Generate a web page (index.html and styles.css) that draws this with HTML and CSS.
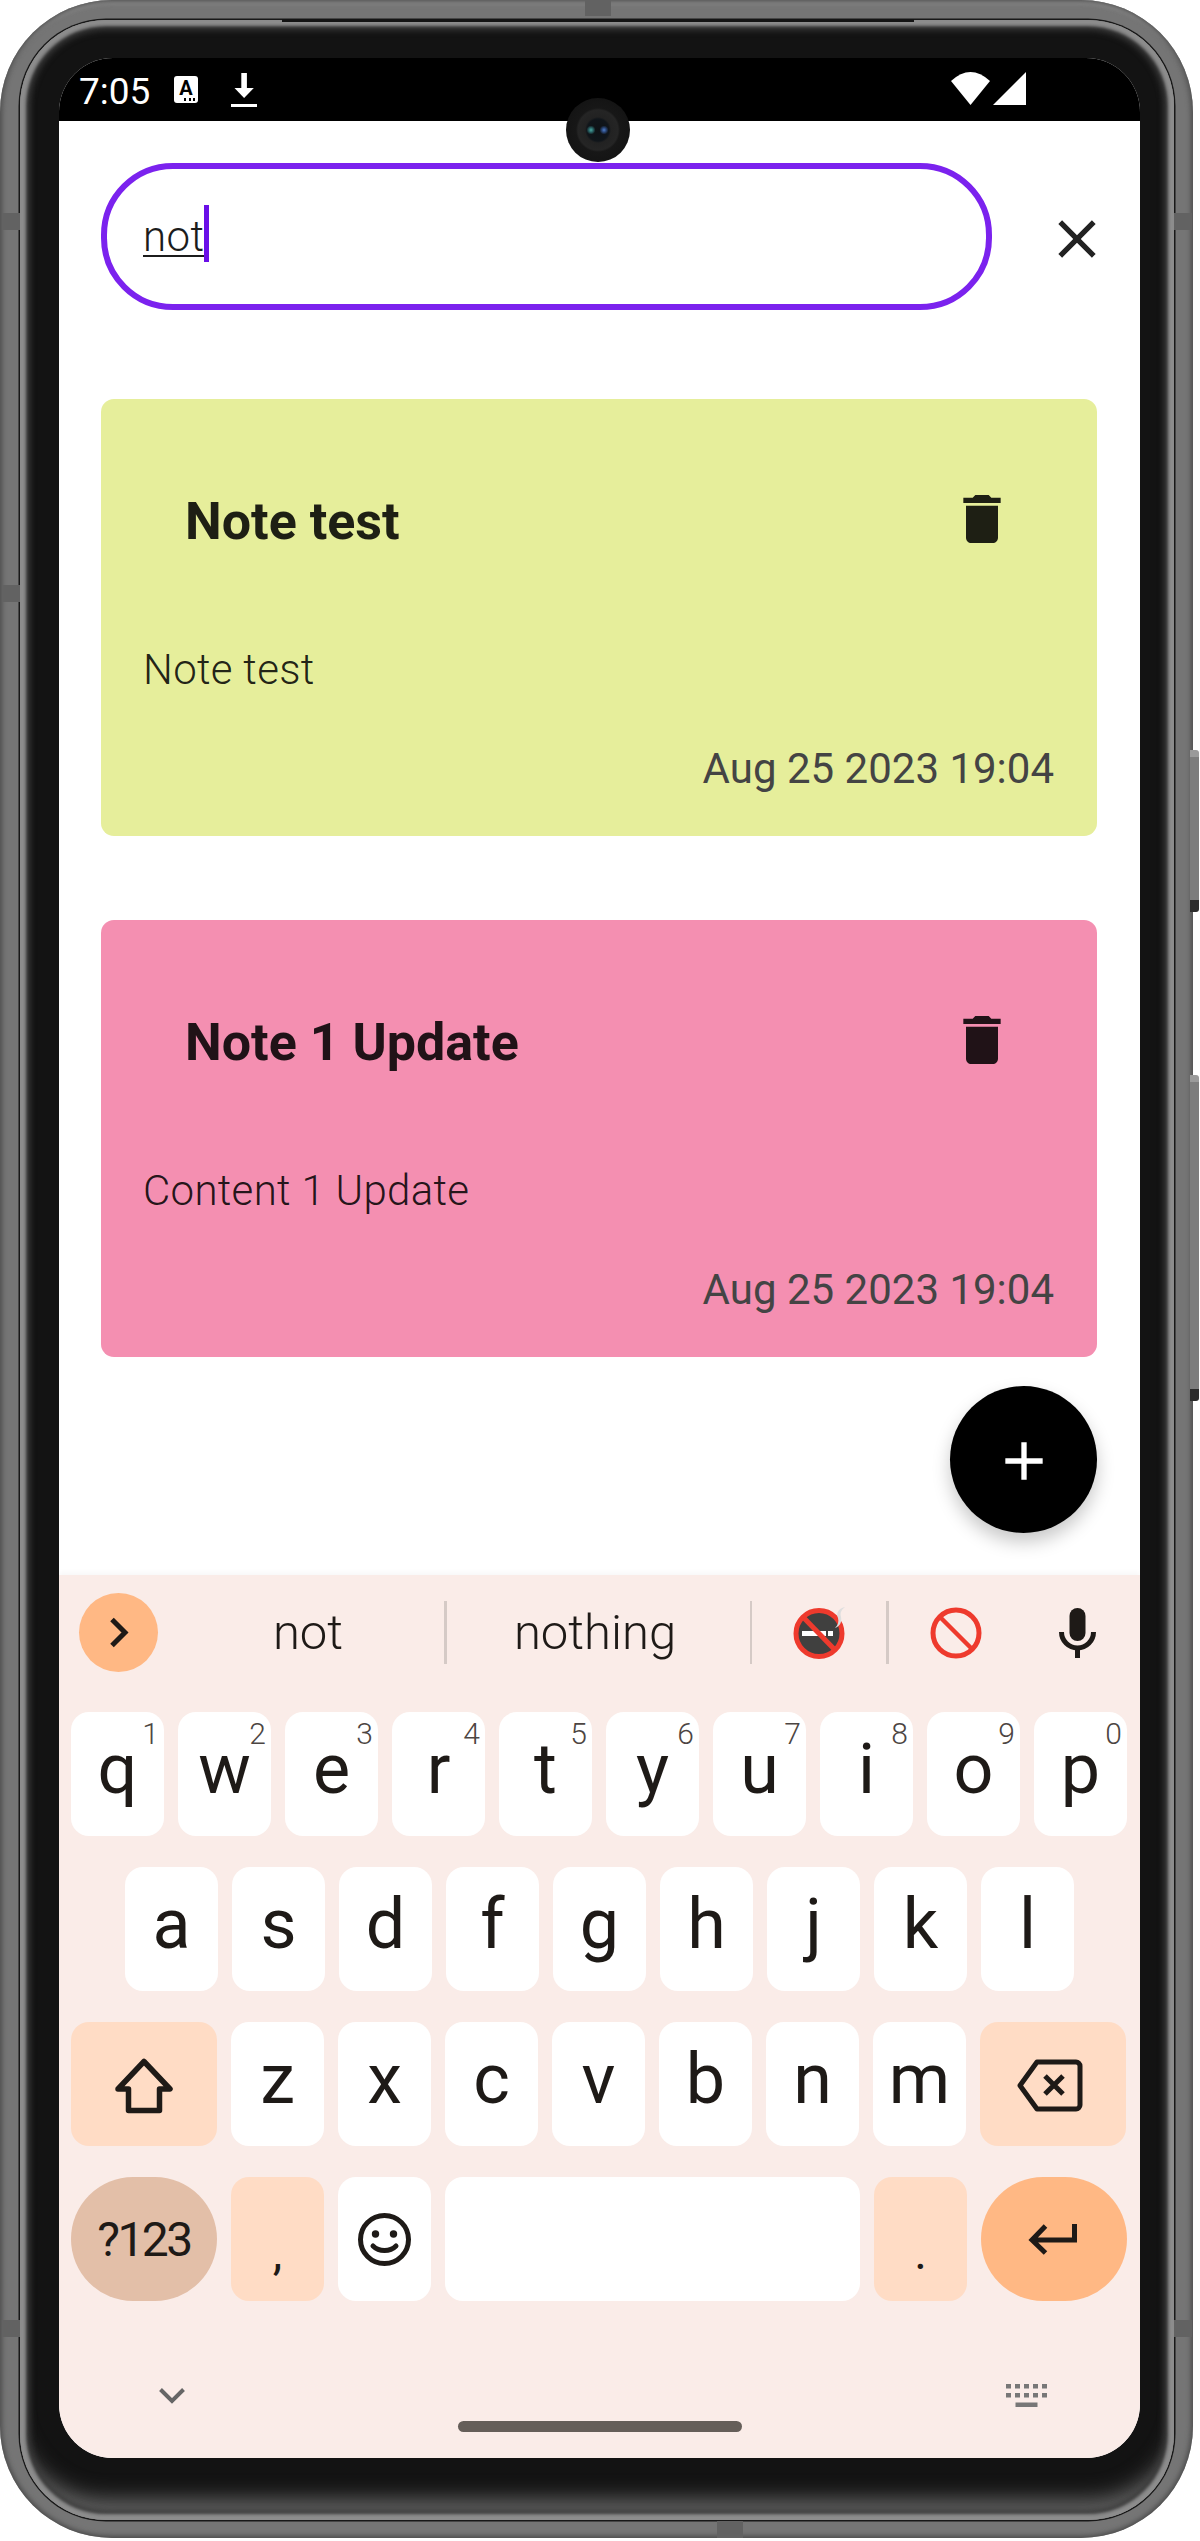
FILE: index.html
```html
<!DOCTYPE html>
<html lang="en">
<head>
<meta charset="utf-8">
<title>Notes search</title>
<link rel="stylesheet" href="styles.css">
</head>
<body>
<div class="phone">
  <span class="side-btn side-btn-power"></span>
  <span class="side-btn side-btn-volume"></span>
  <span class="band band-top"></span>
  <span class="band band-bottom"></span>
  <span class="band band-l1"></span>
  <span class="band band-l2"></span>
  <span class="band band-l3"></span>
  <span class="band band-r1"></span>
  <span class="band band-r2"></span>
  <div class="bezel">
    <div class="screen">
      <div class="status">
        <span class="time">7:05</span>
        <span class="a-icon">A</span>
        <svg class="dl-icon" viewBox="0 0 26 34"><rect x="10.3" y="0" width="5.6" height="16"/><path d="M3.5 15h19.3l-9.7 10z"/><rect x="0" y="31" width="26" height="3"/></svg>
        <svg class="wifi-icon" viewBox="0 0 39 33"><path d="M19.5 33 0 9Q19.5-9 39 9z"/></svg>
        <svg class="signal-icon" viewBox="0 0 33 33"><path d="M33 0v33H0z"/></svg>
      </div>
      <div class="app">
        <div class="search-row">
          <div class="search-box">
            <span class="search-text">not</span><span class="caret"></span>
          </div>
          <svg class="close-icon" viewBox="0 0 24 24"><path d="M19 6.41 17.59 5 12 10.59 6.41 5 5 6.41 10.59 12 5 17.59 6.41 19 12 13.41 17.59 19 19 17.59 13.41 12z"/></svg>
        </div>
        <article class="card card-lime">
          <div class="card-head">
            <h2 class="card-title">Note test</h2>
            <svg class="trash" viewBox="0 0 24 24"><path d="M6 19c0 1.1.9 2 2 2h8c1.1 0 2-.9 2-2V7H6v12zM19 4h-3.5l-1-1h-5l-1 1H5v2h14V4z"/></svg>
          </div>
          <p class="card-body">Note test</p>
          <p class="card-date">Aug 25 2023 19:04</p>
        </article>
        <article class="card card-pink">
          <div class="card-head">
            <h2 class="card-title">Note 1 Update</h2>
            <svg class="trash" viewBox="0 0 24 24"><path d="M6 19c0 1.1.9 2 2 2h8c1.1 0 2-.9 2-2V7H6v12zM19 4h-3.5l-1-1h-5l-1 1H5v2h14V4z"/></svg>
          </div>
          <p class="card-body">Content 1 Update</p>
          <p class="card-date">Aug 25 2023 19:04</p>
        </article>
        <div class="fab">
          <svg class="fab-icon" viewBox="0 0 24 24"><path d="M19 13h-6v6h-2v-6H5v-2h6V5h2v6h6v2z"/></svg>
        </div>
      </div>
      <div class="keyboard">
        <div class="suggest">
          <div class="s-toggle-cell">
            <span class="s-toggle">
              <svg class="s-chevron" viewBox="0 0 20 31"><path d="M3 2.5 16 15.5 3 28.5"/></svg>
            </span>
          </div>
          <span class="s-word s-word-1">not</span>
          <span class="s-div"></span>
          <span class="s-word s-word-2">nothing</span>
          <span class="s-div"></span>
          <span class="s-emoji">
            <svg class="emoji" viewBox="0 0 52 52">
              <circle cx="26" cy="26.500" r="23" fill="#40403f"/>
              <rect x="9" y="24" width="24" height="5" fill="#fff"/>
              <rect x="35" y="24" width="5" height="5" fill="#fff"/>
              <circle cx="26" cy="26.500" r="23" fill="none" stroke="#ee3a2d" stroke-width="5"/>
              <path d="M10 10 42 43" stroke="#ee3a2d" stroke-width="5"/>
              <path d="M52 0c-7 2-9 6-7 11 1 4 0 7-3 10 5-2 7-6 6-11-1-4 0-7 4-10z" fill="#dedede"/>
            </svg>
          </span>
          <span class="s-div"></span>
          <span class="s-emoji">
            <svg class="emoji" viewBox="0 0 52 52">
              <circle cx="26" cy="26" r="23" fill="none" stroke="#ee3a2d" stroke-width="5"/>
              <path d="M10 10 42 42" stroke="#ee3a2d" stroke-width="4.5"/>
            </svg>
          </span>
          <span class="s-mic">
            <svg class="mic" viewBox="0 0 37 50"><rect x="10.5" y="0" width="16" height="33" rx="8"/><path class="mic-arc" d="M2.5 24a16 16 0 0 0 32 0"/><rect x="16" y="39" width="5" height="11"/></svg>
          </span>
        </div>
        <div class="keys">
          <div class="row">
            <div class="key">q<sup class="num">1</sup></div>
            <div class="key">w<sup class="num">2</sup></div>
            <div class="key">e<sup class="num">3</sup></div>
            <div class="key">r<sup class="num">4</sup></div>
            <div class="key">t<sup class="num">5</sup></div>
            <div class="key">y<sup class="num">6</sup></div>
            <div class="key">u<sup class="num">7</sup></div>
            <div class="key">i<sup class="num">8</sup></div>
            <div class="key">o<sup class="num">9</sup></div>
            <div class="key">p<sup class="num">0</sup></div>
          </div>
          <div class="row row-home">
            <div class="key">a</div><div class="key">s</div><div class="key">d</div><div class="key">f</div><div class="key">g</div><div class="key">h</div><div class="key">j</div><div class="key">k</div><div class="key">l</div>
          </div>
          <div class="row">
            <div class="key key-fn key-wide">
              <svg class="i-shift" viewBox="0 0 60 57"><path d="M30 4.500 56 32H45.500V53.500H14.500V32H4z"/></svg>
            </div>
            <div class="key">z</div><div class="key">x</div><div class="key">c</div><div class="key">v</div><div class="key">b</div><div class="key">n</div><div class="key">m</div>
            <div class="key key-fn key-wide">
              <svg class="i-back" viewBox="0 0 66 53"><path d="M20 3H59a4 4 0 0 1 4 4V46a4 4 0 0 1-4 4H20L3 26.500z"/><path d="M28 17 46 35M46 17 28 35"/></svg>
            </div>
          </div>
          <div class="row">
            <div class="key key-wide key-pill key-sym">?123</div>
            <div class="key key-fn key-punct">,</div>
            <div class="key key-icon">
              <svg class="i-smile" viewBox="0 0 53 53"><circle class="face" cx="26.500" cy="26.500" r="24"/><circle cx="17.500" cy="21" r="3.700"/><circle cx="35.500" cy="21" r="3.700"/><path class="face" d="M15 33c6 6 17 6 23 0"/></svg>
            </div>
            <div class="key key-space"></div>
            <div class="key key-fn key-punct">.</div>
            <div class="key key-wide key-pill key-enter">
              <svg class="i-enter" viewBox="0 0 50 31"><path d="M46.500 0V16H5M17.500 2 4 16 17.500 29"/></svg>
            </div>
          </div>
        </div>
        <div class="kb-nav">
          <svg class="nav-chevron" viewBox="0 0 26 16"><path d="M1.500 1.500 13 13 24.500 1.500"/></svg>
          <svg class="nav-kbd" viewBox="0 0 41 23">
            <rect x="0" y="0" width="5" height="4.500"/><rect x="9" y="0" width="5" height="4.500"/><rect x="18" y="0" width="5" height="4.500"/><rect x="27" y="0" width="5" height="4.500"/><rect x="36" y="0" width="5" height="4.500"/>
            <rect x="0" y="9" width="5" height="4.500"/><rect x="9" y="9" width="5" height="4.500"/><rect x="18" y="9" width="5" height="4.500"/><rect x="27" y="9" width="5" height="4.500"/><rect x="36" y="9" width="5" height="4.500"/>
            <rect x="9.500" y="18.500" width="22" height="4.500"/>
          </svg>
        </div>
        <div class="home-pill"></div>
      </div>
    </div>
  </div>
  <span class="top-seam"></span>
  <div class="camera"></div>
</div>
</body>
</html>
```
FILE: styles.css
```css
* { box-sizing: border-box; }
html, body { margin: 0; padding: 0; background: #fff; }
body {
  width: 1200px;
  height: 2541px;
  overflow: hidden;
  font-family: Roboto, "Liberation Sans", sans-serif;
}

/* device frame */
.phone {
  position: relative;
  width: 1193px;
  height: 2538px;
  padding: 20px 19px 18px 20px;
  border-radius: 112px;
  background: #757575;
  box-shadow: inset 0 0 5px 2px #4a4a4a, inset 0 5px 5px -2px #adadad;
}
.bezel {
  width: 100%;
  height: 100%;
  padding: 38px 33px 63px 39px;
  border-radius: 86px;
  background: #131313;
  box-shadow:
    0 0 0 1.500px #181818,
    inset 0 0 0 3px #8c8c8c,
    inset 0 0 3px 6px #8a8a8a,
    inset 0 0 6px 10px #3a3a3a,
    inset 0 -30px 22px -10px #6a6a6a;
}
.screen {
  position: relative;
  width: 1081px;
  height: 2400px;
  border-radius: 54px;
  overflow: hidden;
  background: #fff;
  display: flex;
  flex-direction: column;
}
.top-seam {
  position: absolute;
  left: 282px;
  top: 19px;
  width: 632px;
  height: 3px;
  background: #141414;
}
.band { position: absolute; background: #626262; }
.band-top { left: 585px; top: 0; width: 26px; height: 16px; }
.band-bottom { left: 717px; top: 2521px; width: 26px; height: 17px; }
.band-l1, .band-l2, .band-l3 { left: 2px; width: 18px; height: 17px; }
.band-l1 { top: 213px; }
.band-l2 { top: 585px; }
.band-l3 { top: 2320px; }
.band-r1, .band-r2 { left: 1174px; width: 18px; height: 17px; }
.band-r1 { top: 213px; }
.band-r2 { top: 2320px; }
.side-btn {
  position: absolute;
  left: 1190px;
  width: 9px;
  border-radius: 0 3px 3px 0;
  background: #7d7d7d;
  border-top: 7px solid #9a9a9a;
  border-bottom: 12px solid #2c2c2c;
}
.side-btn-power { top: 750px; height: 162px; }
.side-btn-volume { top: 1075px; height: 326px; }
.camera {
  position: absolute;
  left: 566px;
  top: 98px;
  width: 64px;
  height: 64px;
  border-radius: 50%;
  background:
    radial-gradient(circle at 25px 32px, #4aa69f 0, #2b6a6c 2px, transparent 4.500px),
    radial-gradient(circle at 38px 32px, #4f7fc8 0, #2c4a80 2px, transparent 4.500px),
    radial-gradient(circle at 32px 32px, #0e1216 0, #10151a 11px, #222 13px, #252525 20px, #171717 22px, #141414 32px);
}

/* status bar */
.status {
  height: 63px;
  flex: none;
  background: #000;
  color: #fff;
  display: flex;
  align-items: center;
  padding: 0 114px 0 20px;
}
.time { font-size: 37px; margin-top: 3px; width: 71px; }
.a-icon {
  position: relative;
  width: 24px;
  height: 27px;
  margin-left: 24px;
  border-radius: 3px;
  background: #fff;
  color: #000;
  font-size: 20px;
  font-weight: 700;
  line-height: 25px;
  text-align: center;
}
.a-icon::after {
  content: "";
  position: absolute;
  right: 3px;
  bottom: 2px;
  width: 11px;
  height: 3px;
  background: repeating-linear-gradient(90deg, #000 0 2px, transparent 2px 4.500px);
}
.dl-icon { width: 26px; height: 34px; margin-left: 33px; fill: #fff; }
.wifi-icon { width: 39px; height: 33px; margin-left: auto; margin-top: -2px; fill: #fff; }
.signal-icon { width: 33px; height: 33px; margin-left: 3px; margin-top: -2px; fill: #fff; }

/* app */
.app {
  position: relative;
  height: 1454px;
  flex: none;
  padding: 42px 43px 0 42px;
  background: #fff;
}
.search-row { display: flex; align-items: center; justify-content: space-between; }
.search-box {
  width: 891px;
  height: 147px;
  padding-left: 36px;
  border: 6px solid #7b22ee;
  border-radius: 72px;
  display: flex;
  align-items: center;
}
.search-text {
  font-size: 42px;
  font-weight: 300;
  letter-spacing: 0.400px;
  color: #1c1c1c;
  text-decoration: underline;
  text-decoration-thickness: 2px;
  text-underline-offset: 4px;
}
.caret { width: 5px; height: 57px; margin-top: -6px; background: #6a0fe8; }
.close-icon { width: 64px; height: 64px; margin: 5px -12px 0 0; fill: #222; }

.card {
  height: 437px;
  padding-top: 88px;
  border-radius: 13px;
  color: rgba(0, 0, 0, 0.87);
}
.search-row + .card { margin-top: 89px; }
.card + .card { margin-top: 84px; }
.card-lime { background: #e6ee9b; }
.card-pink { background: #f48fb1; }
.card-head {
  display: flex;
  align-items: center;
  justify-content: space-between;
  height: 64px;
  padding: 0 83px 0 84px;
}
.card-title { margin: 6px 0 0; font-size: 52px; line-height: 64px; font-weight: 700; }
.trash { width: 64px; height: 64px; fill: currentColor; }
.card-body {
  margin: 89px 0 0;
  padding-left: 42px;
  font-size: 42px;
  line-height: 60px;
  font-weight: 300;
  letter-spacing: 0.300px;
}
.card-date {
  margin: 39px 0 0;
  padding-right: 43px;
  text-align: right;
  font-size: 42px;
  line-height: 60px;
  color: #444;
}
.fab {
  position: absolute;
  right: 43px;
  bottom: 42px;
  width: 147px;
  height: 147px;
  border-radius: 50%;
  background: #000;
  box-shadow: 0 9px 18px rgba(0, 0, 0, 0.22);
  display: flex;
  align-items: center;
  justify-content: center;
}
.fab-icon { width: 64px; height: 64px; margin-top: 2px; fill: #fff; }

/* keyboard */
.keyboard {
  position: relative;
  flex: 1;
  background: #faece8;
  box-shadow: 0 -3px 5px rgba(0, 0, 0, 0.03);
  color: #1e1a17;
}
.suggest {
  height: 137px;
  display: flex;
  align-items: flex-start;
}
.s-toggle-cell { width: 113px; flex: none; padding: 18px 0 0 20px; }
.s-toggle {
  width: 79px;
  height: 79px;
  border-radius: 50%;
  background: #ffb884;
  display: flex;
  align-items: center;
  justify-content: center;
}
.s-chevron { width: 20px; height: 31px; fill: none; stroke: #1e1a17; stroke-width: 5; }
.s-word {
  height: 115px;
  font-size: 49px;
  font-weight: 300;
  line-height: 115px;
  text-align: center;
  flex: none;
}
.s-word-1 { width: 272px; }
.s-word-2 { width: 303px; padding-right: 6px; }
.s-div {
  width: 2.500px;
  height: 63px;
  margin-top: 26px;
  background: #d5cac6;
  flex: none;
}
.s-emoji {
  width: 134px;
  height: 115px;
  display: flex;
  align-items: center;
  justify-content: center;
  flex: none;
}
.emoji { width: 52px; height: 52px; }
.s-mic {
  width: 110px;
  height: 115px;
  display: flex;
  align-items: center;
  justify-content: center;
  flex: none;
}
.mic { width: 37px; height: 50px; fill: #1e1a17; }
.mic-arc { fill: none; stroke: #1e1a17; stroke-width: 5; }

.keys { display: flex; flex-direction: column; gap: 31px; padding: 0 13px 0 12px; }
.row { display: flex; gap: 14px; height: 124px; }
.row-home { padding-left: 54px; }
.key {
  position: relative;
  width: 93px;
  height: 124px;
  padding-bottom: 10px;
  border-radius: 18px;
  background: #fff;
  font-size: 70px;
  display: flex;
  align-items: center;
  justify-content: center;
}
.num {
  position: absolute;
  top: 7px;
  right: 5px;
  font-size: 30px;
  font-weight: 300;
  line-height: 30px;
  color: #4c4542;
  vertical-align: baseline;
}
.key-fn { background: #ffdcc5; }
.key-wide { width: 146px; padding-bottom: 0; }
.key-pill { border-radius: 62px; }
.key-sym { background: #e3bfa8; font-size: 48px; letter-spacing: -2.500px; }
.key-enter { background: #ffb884; }
.key-punct { font-size: 48px; padding: 26px 0 0; }
.key-icon { padding: 0; }
.key-space { flex: 1; padding: 0; }
.i-shift { width: 60px; height: 57px; margin-top: 3px; fill: none; stroke: #1e1a17; stroke-width: 5.500; stroke-linejoin: round; }
.i-back { width: 66px; height: 53px; margin: 3px 0 0 -7px; fill: none; stroke: #1e1a17; stroke-width: 5; stroke-linejoin: round; }
.i-smile { width: 53px; height: 53px; fill: #1e1a17; }
.face { fill: none; stroke: #1e1a17; stroke-width: 5; stroke-linecap: round; }
.i-enter { width: 50px; height: 31px; margin-left: -2px; fill: none; stroke: #1e1a17; stroke-width: 5; }

.kb-nav {
  height: 23px;
  margin-top: 83px;
  padding: 0 93px 0 100px;
  display: flex;
  align-items: center;
  justify-content: space-between;
}
.nav-chevron { width: 26px; height: 16px; fill: none; stroke: #666; stroke-width: 4; }
.nav-kbd { width: 41px; height: 23px; fill: #777; }
.home-pill {
  width: 284px;
  height: 11px;
  margin: 14px auto 0;
  border-radius: 6px;
  background: #655e59;
}
```
